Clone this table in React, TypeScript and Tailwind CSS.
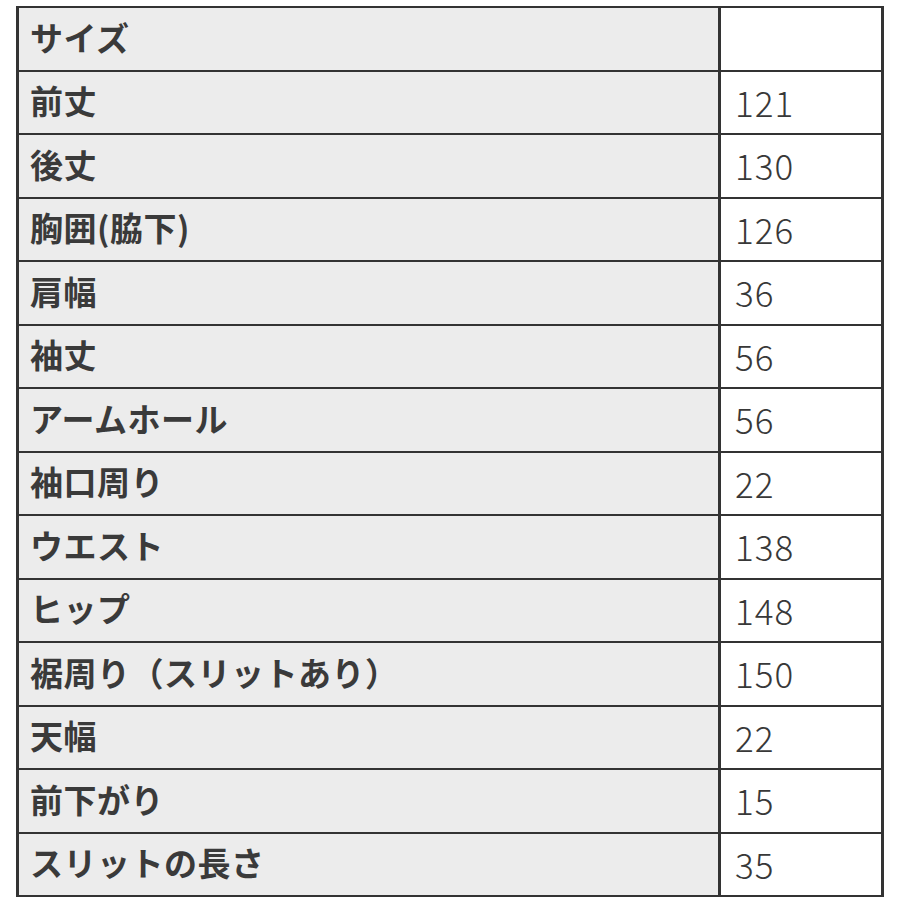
const rows: [string, string][] = [
  ["サイズ", ""],
  ["前丈", "121"],
  ["後丈", "130"],
  ["胸囲(脇下)", "126"],
  ["肩幅", "36"],
  ["袖丈", "56"],
  ["アームホール", "56"],
  ["袖口周り", "22"],
  ["ウエスト", "138"],
  ["ヒップ", "148"],
  ["裾周り（スリットあり）", "150"],
  ["天幅", "22"],
  ["前下がり", "15"],
  ["スリットの長さ", "35"],
];

export default function App() {
  return (
    <div
      className="w-[900px] h-[900px] bg-white overflow-hidden pt-[6px] pl-[16px]"
      style={{ fontFamily: '"Noto Sans CJK JP", "Noto Sans", sans-serif' }}
    >
      <div className="w-[868px] border-t-2 border-x-[3px] border-[#333333]">
        {rows.map(([label, value]) => (
          <div
            key={label}
            className="grid grid-cols-[702px_1fr] h-[63.5px] border-b-[2.5px] border-[#333333]"
          >
            <div className="bg-[#ececec] border-r-[3px] border-[#333333] flex items-center pl-[11px] pb-[3px] text-[33px] font-bold text-[#3a3a3a] leading-none tracking-[0.5px]">
              {label}
            </div>
            <div className="bg-white flex items-center pl-[14px] pb-[2px] text-[35px] font-light text-[#383838] leading-none tracking-[1px]">
              {value}
            </div>
          </div>
        ))}
      </div>
    </div>
  );
}
